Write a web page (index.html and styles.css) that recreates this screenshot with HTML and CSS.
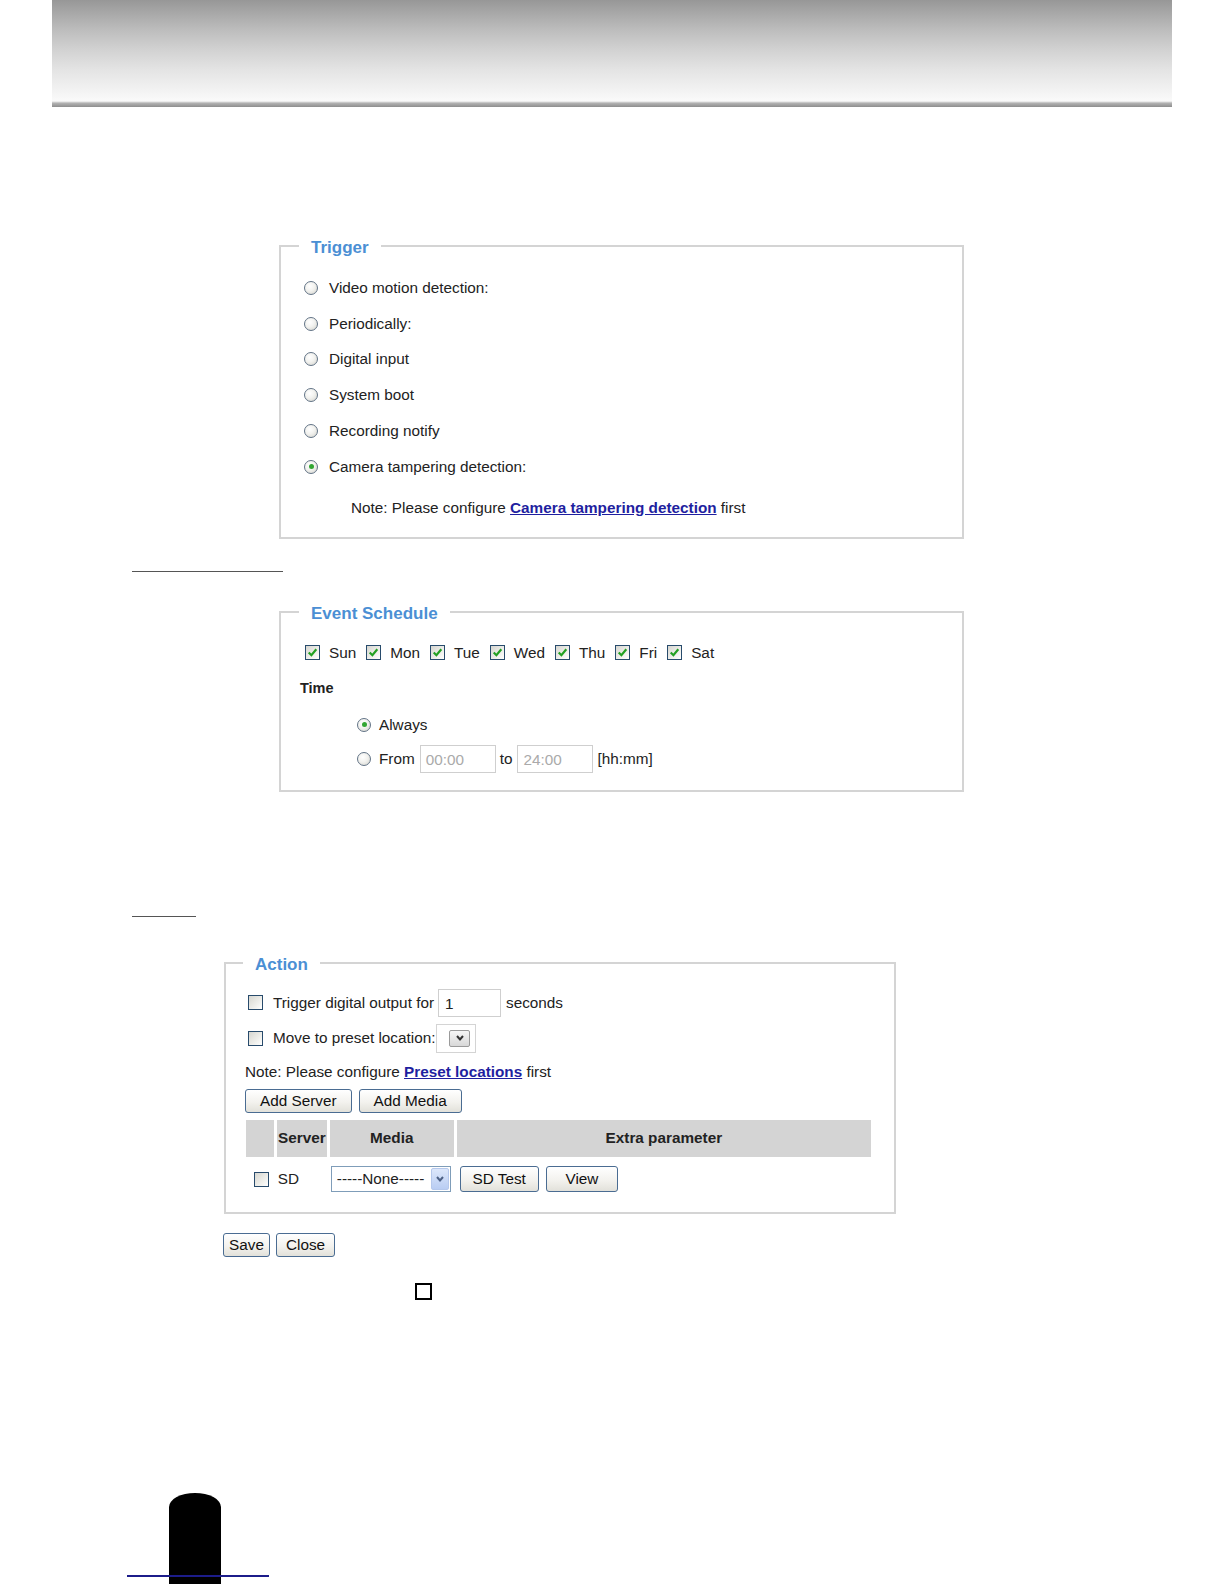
FILE: index.html
```html
<!DOCTYPE html>
<html lang="en">
<head>
    <meta charset="UTF-8">
    <meta name="viewport" content="width=device-width, initial-scale=1.0">
    <title>Event Settings</title>
    <link rel="stylesheet" href="styles.css">
</head>
<body>
    <div class="banner"></div>

    <fieldset class="box trigger">
        <legend>Trigger</legend>
        <label class="opt"><span class="radio"></span>Video motion detection:</label>
        <label class="opt"><span class="radio"></span>Periodically:</label>
        <label class="opt"><span class="radio"></span>Digital input</label>
        <label class="opt"><span class="radio"></span>System boot</label>
        <label class="opt"><span class="radio"></span>Recording notify</label>
        <label class="opt"><span class="radio on"></span>Camera tampering detection:</label>
        <p class="note indent">Note: Please configure <a href="#">Camera tampering detection</a> first</p>
    </fieldset>

    <div class="rule rule-long"></div>

    <fieldset class="box schedule">
        <legend>Event Schedule</legend>
        <div class="days">
            <label class="day"><span class="check on"><svg viewBox="0 0 12 12"><path d="M2.5 6 L5 8.5 L9.5 3"/></svg></span>Sun</label>
            <label class="day"><span class="check on"><svg viewBox="0 0 12 12"><path d="M2.5 6 L5 8.5 L9.5 3"/></svg></span>Mon</label>
            <label class="day"><span class="check on"><svg viewBox="0 0 12 12"><path d="M2.5 6 L5 8.5 L9.5 3"/></svg></span>Tue</label>
            <label class="day"><span class="check on"><svg viewBox="0 0 12 12"><path d="M2.5 6 L5 8.5 L9.5 3"/></svg></span>Wed</label>
            <label class="day"><span class="check on"><svg viewBox="0 0 12 12"><path d="M2.5 6 L5 8.5 L9.5 3"/></svg></span>Thu</label>
            <label class="day"><span class="check on"><svg viewBox="0 0 12 12"><path d="M2.5 6 L5 8.5 L9.5 3"/></svg></span>Fri</label>
            <label class="day"><span class="check on"><svg viewBox="0 0 12 12"><path d="M2.5 6 L5 8.5 L9.5 3"/></svg></span>Sat</label>
        </div>
        <div class="time-title">Time</div>
        <label class="time-opt always"><span class="radio on"></span>Always</label>
        <div class="time-opt from">
            <span class="radio"></span>
            <span class="from-label">From</span>
            <span class="field wide disabled">00:00</span>
            <span>to</span>
            <span class="field wide disabled">24:00</span>
            <span>[hh:mm]</span>
        </div>
    </fieldset>

    <div class="rule rule-short"></div>

    <fieldset class="box action">
        <legend>Action</legend>
        <div class="act-row first">
            <span class="check"></span>
            <span>Trigger digital output for</span>
            <span class="field">1</span>
            <span class="after">seconds</span>
        </div>
        <div class="act-row second">
            <span class="check"></span>
            <span>Move to preset location:</span>
            <span class="mini-select"><span class="mini-btn"><svg viewBox="0 0 10 8"><path d="M2 2 L5 5.5 L8 2"/></svg></span></span>
        </div>
        <p class="note action-note">Note: Please configure <a href="#">Preset locations</a> first</p>
        <div class="btn-row">
            <button class="btn">Add Server</button>
            <button class="btn">Add Media</button>
        </div>
        <table class="media-table">
            <thead>
                <tr>
                    <th class="c-check"></th>
                    <th class="c-server">Server</th>
                    <th class="c-media">Media</th>
                    <th class="c-extra">Extra parameter</th>
                </tr>
            </thead>
            <tbody>
                <tr>
                    <td class="c-check"><span class="check"></span></td>
                    <td class="c-server">SD</td>
                    <td class="c-media">
                        <span class="select">-----None-----<span class="select-btn"><svg viewBox="0 0 10 8"><path d="M2 2 L5 5.5 L8 2"/></svg></span></span>
                    </td>
                    <td class="c-extra">
                        <button class="btn tall sd-test">SD Test</button>
                        <button class="btn tall view">View</button>
                    </td>
                </tr>
            </tbody>
        </table>
    </fieldset>

    <div class="form-buttons">
        <button class="btn save">Save</button>
        <button class="btn close">Close</button>
    </div>

    <span class="square"></span>

    <footer class="page-foot">
        <div class="tab"></div>
        <div class="foot-line"></div>
    </footer>
</body>
</html>
```

FILE: styles.css
```css
body { margin: 0; font-family: "Liberation Sans", Arial, sans-serif; font-size: 15.3px; color: #222; background: #fff; }

.banner {
    margin-left: 52px; width: 1120px; height: 107px;
    background: linear-gradient(to bottom, #979797 0, #a4a4a4 10px, #bdbdbd 30px, #d2d2d2 50px, #e4e4e4 70px, #f2f2f2 90px, #fafafa 101px, #dcdcdc 102px, #b4b4b4 103px, #8e8e8e 107px);
}

/* fieldset boxes */
.box { box-sizing: border-box; border: 2px solid #d4d4d4; margin: 0; padding: 0 20px 0 23px; min-width: 0; }
.box legend { font-size: 17px; font-weight: bold; color: #4b8fd4; line-height: 20px; padding: 4px 12px 0; margin-left: -5px; }

.trigger { margin: 127px 0 0 279px; width: 685px; padding-top: 12px; padding-bottom: 19px; }
.opt { display: flex; align-items: center; gap: 11px; height: 35.8px; }
.note { margin: 0; line-height: 20px; }
.note a { color: #1f1fa0; font-weight: bold; text-decoration: underline; }
.indent { margin: 13px 0 0 47px; }

.rule { height: 1px; background: #555; }
.rule-long { margin: 32px 0 0 132px; width: 151px; }
.rule-short { margin: 124px 0 0 132px; width: 64px; }

.schedule { margin: 28px 0 0 279px; width: 685px; padding-top: 17px; padding-bottom: 17px; }
.days { display: flex; height: 24px; align-items: center; padding-left: 1px; }
.day { display: flex; align-items: center; gap: 9px; margin-right: 10px; }
.time-title { margin: 11px 0 0 -4px; line-height: 24px; font-weight: bold; font-size: 14.5px; }
.time-opt { display: flex; align-items: center; gap: 8px; height: 28px; margin-left: 53px; }
.always { margin-top: 11px; }
.from { margin-top: 6px; gap: 4px; }
.from .radio { margin-right: 4px; }
.from-label { margin-right: 1px; }
.from .field + span { margin-right: 1px; }

.action { margin: 34px 0 0 224px; width: 672px; padding: 14px 20px 19px 19px; }
.action legend { margin-left: -2px; }
.act-row { display: flex; align-items: center; gap: 4px; padding-left: 3px; }
.act-row .check { margin-right: 6px; }
.act-row.first { height: 28px; }
.act-row.second { height: 29px; margin-top: 7px; }
.act-row .after { margin-left: 1px; }
.action-note { margin-top: 9px; }
.btn-row { display: flex; gap: 7px; margin-top: 7px; }

/* form widgets */
.radio {
    box-sizing: border-box; width: 14px; height: 14px; border-radius: 50%; flex: none;
    border: 1px solid #627386;
    background: radial-gradient(circle at 40% 35%, #ffffff 0, #f2f2ef 45%, #d0d0ca 100%);
    display: inline-flex; align-items: center; justify-content: center;
}
.radio.on::after { content: ""; width: 5px; height: 5px; border-radius: 50%; background: #33a633; }

.check {
    box-sizing: border-box; width: 15px; height: 15px; flex: none; display: inline-block;
    border: 1px solid #284b6c;
    background: linear-gradient(135deg, #d6d6d0 0, #efefeb 60%, #ffffff 100%);
}
.check svg { display: block; width: 13px; height: 13px; }
.check svg path { fill: none; stroke: #22a022; stroke-width: 2; }

.field {
    box-sizing: border-box; display: inline-flex; align-items: center; width: 63px; height: 28px;
    border: 1px solid #cfcfcf; padding: 2px 6px 0; background: #fff;
}
.field.wide { width: 76px; }
.field.disabled { color: #aaa; padding-left: 5px; }

.mini-select {
    box-sizing: border-box; display: inline-flex; align-items: center; width: 40px; height: 29px;
    border: 1px solid #d4d4d4; padding-left: 12px; margin-left: -3px;
}
.mini-btn {
    box-sizing: border-box; display: inline-flex; align-items: center; justify-content: center; width: 21px; height: 17px;
    border: 1px solid #9a9a9a; border-radius: 2px; background: linear-gradient(#f6f6f6, #d8d8d8);
}
.mini-btn svg { width: 10px; height: 8px; }
.mini-btn svg path, .select-btn svg path { fill: none; stroke: #333; stroke-width: 2; }

.btn {
    box-sizing: border-box; font: inherit; font-size: 15.3px; color: #111; height: 24px; line-height: 20px;
    padding: 0 14px; border: 1px solid #4a6c92; border-radius: 3px;
    background: linear-gradient(#ffffff, #f3f2ee 55%, #e2e1da); cursor: pointer;
}
.btn.tall { height: 26px; }
.sd-test { width: 79px; padding: 0; }
.view { width: 72px; padding: 0; margin-left: 3px; }

/* media table */
.media-table { border-collapse: separate; border-spacing: 3px 0; margin: 7px 0 0 -2px; table-layout: fixed; }
.media-table th { background: #d4d4d4; height: 37px; padding: 0; font-weight: bold; text-align: center; }
.media-table td { padding: 8px 0 0; height: 28px; vertical-align: middle; }
.c-check { width: 28px; text-align: center; }
.c-server { width: 49px; }
.c-media { width: 123px; }
.c-extra { width: 417px; }
td.c-check .check { vertical-align: middle; margin-left: 3px; }
td.c-server { padding-left: 1px; }
td.c-media { padding-left: 1px; }
td.c-extra { padding-left: 3px; }

.select {
    box-sizing: border-box; display: flex; align-items: center; position: relative; width: 120px; height: 26px;
    border: 1px solid #7f9db9; padding-left: 5px; background: #fff; font-size: 15.3px;
}
.select-btn {
    box-sizing: border-box; position: absolute; right: 1px; top: 1px; bottom: 1px; width: 18px;
    display: flex; align-items: center; justify-content: center;
    background: linear-gradient(#dce7fb, #b9cdf3); border: 1px solid #b5c8ec; border-radius: 2px;
}
.select-btn svg { width: 10px; height: 8px; }
.select-btn svg path { stroke: #4d6185; }

.form-buttons { display: flex; gap: 6px; margin: 19px 0 0 223px; }
.save { width: 47px; padding: 0; }
.close { width: 59px; padding: 0; }

.square { display: block; box-sizing: border-box; width: 17px; height: 17px; border: 2px solid #000; margin: 26px 0 0 415px; }

.page-foot { position: relative; margin-top: 193px; height: 91px; }
.tab { margin-left: 169px; width: 52px; height: 91px; background: #000; border-radius: 26px 26px 0 0 / 14px 14px 0 0; }
.foot-line { position: absolute; left: 127px; top: 82px; width: 142px; height: 2px; background: #1c1c8a; }
```
